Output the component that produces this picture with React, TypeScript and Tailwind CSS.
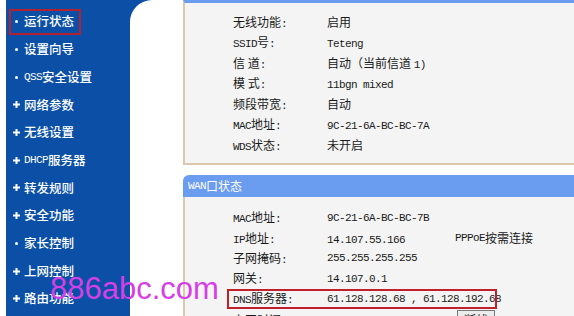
import React from 'react';

const menu = [
  { text: '运行状态', dot: true },
  { text: '设置向导', dot: true },
  { text: 'QSS安全设置', dot: true },
  { text: '网络参数', dot: false },
  { text: '无线设置', dot: false },
  { text: 'DHCP服务器', dot: false },
  { text: '转发规则', dot: false },
  { text: '安全功能', dot: false },
  { text: '家长控制', dot: true },
  { text: '上网控制', dot: false },
  { text: '路由功能', dot: false },
];

const wireless = [
  ['无线功能:', '启用'],
  ['SSID号:', 'Teteng'],
  ['信 道:', '自动（当前信道 1)'],
  ['模 式:', '11bgn mixed'],
  ['频段带宽:', '自动'],
  ['MAC地址:', '9C-21-6A-BC-BC-7A'],
  ['WDS状态:', '未开启'],
];

// ASCII runs are drawn narrower, like SimSun's half-width glyphs
function Mixed({ text }: { text: string }) {
  const parts = text.split(/([\x21-\x7E][\x20-\x7E]*)/);
  return (
    <>
      {parts.map((p, i) =>
        i % 2 === 1 ? (
          <span key={i} className="font-['Liberation_Mono',monospace] text-[11px] tracking-[-0.6px]">
            {p}
          </span>
        ) : (
          <span key={i}>{p}</span>
        )
      )}
    </>
  );
}

function Plus() {
  return (
    <svg width="7" height="7" viewBox="0 0 7 7">
      <rect x="2.5" y="0" width="2" height="7" fill="#fff" />
      <rect x="0" y="2.5" width="7" height="2" fill="#fff" />
    </svg>
  );
}

export default function App() {
  return (
    <div className="relative flex h-[316px] w-[574px] overflow-hidden bg-white font-['Noto_Sans_CJK_SC',sans-serif] text-[12px] text-[#1a1a1a]">
      <div className="w-[6px] shrink-0" />
      <div className="flex flex-1 bg-[#0b4fa6]">
        {/* Left menu */}
        <nav className="w-[124px] shrink-0 pt-[8px] font-medium text-white">
          {menu.map((m, i) => (
            <div key={m.text} className="relative flex h-[27.7px] items-center pl-[7px] text-[12.5px]">
              <span className="flex w-[11px] items-center">
                {m.dot ? <span className="ml-[2px] h-[3px] w-[3px] rounded-full bg-white" /> : <Plus />}
              </span>
              <Mixed text={m.text} />
              {i === 0 && (
                <span className="absolute left-[3px] top-[1px] h-[26px] w-[72px] border-2 border-[#b3202e]" />
              )}
            </div>
          ))}
        </nav>

        {/* Content */}
        <main className="flex-1 rounded-tl-[22px] bg-white pl-[53px]">
          <section className="h-[165px] border-b-2 border-l-2 border-t-[3px] border-[#dcc8ac] border-t-[#6a9cf0] bg-[#f4f4f4] pl-[48px] pt-[9px]">
            {wireless.map(([k, v]) => (
              <div key={k} className="flex h-[20.5px] items-center">
                <span className="w-[94px]">
                  <Mixed text={k} />
                </span>
                <span>
                  <Mixed text={v} />
                </span>
              </div>
            ))}
          </section>

          <section className="mt-[10px]">
            <div className="flex h-[22px] items-center rounded-tl-[6px] bg-[#6a9cf0] pl-[5px] text-white">
              <Mixed text="WAN口状态" />
            </div>
            <div className="h-[200px] border-l-2 border-[#dcc8ac] bg-[#f4f4f4] pl-[48px] pt-[11px]">
              <div className="flex h-[20.25px] items-center">
                <span className="w-[94px]"><Mixed text="MAC地址:" /></span>
                <Mixed text="9C-21-6A-BC-BC-7B" />
              </div>
              <div className="flex h-[20.25px] items-center">
                <span className="w-[94px]"><Mixed text="IP地址:" /></span>
                <span className="w-[128px]"><Mixed text="14.107.55.166" /></span>
                <Mixed text="PPPoE按需连接" />
              </div>
              <div className="flex h-[20.25px] items-center">
                <span className="w-[94px]"><Mixed text="子网掩码:" /></span>
                <Mixed text="255.255.255.255" />
              </div>
              <div className="flex h-[20.25px] items-center">
                <span className="w-[94px]"><Mixed text="网关:" /></span>
                <Mixed text="14.107.0.1" />
              </div>
              <div className="relative flex h-[20.25px] items-center">
                <span className="w-[94px]"><Mixed text="DNS服务器:" /></span>
                <Mixed text="61.128.128.68 , 61.128.192.68" />
                <span className="absolute -left-[6px] top-0 h-[20px] w-[270px] border-2 border-[#c0202a]" />
              </div>
              <div className="flex h-[22px] items-center">
                <span className="w-[94px]"><Mixed text="上网时间:" /></span>
                <span className="w-[130px]"><Mixed text="0 day(s) 00:01:25" /></span>
                <button className="h-[20px] w-[38px] border border-[#7a7a7a] bg-[#ececec] text-[12px]">断线</button>
              </div>
            </div>
          </section>
        </main>
      </div>

      {/* Watermark */}
      <div className="pointer-events-none absolute left-[50px] top-[273px] font-['Liberation_Sans',sans-serif] text-[31px] leading-none text-[#d63fe6]">
        886abc.com
      </div>
    </div>
  );
}
